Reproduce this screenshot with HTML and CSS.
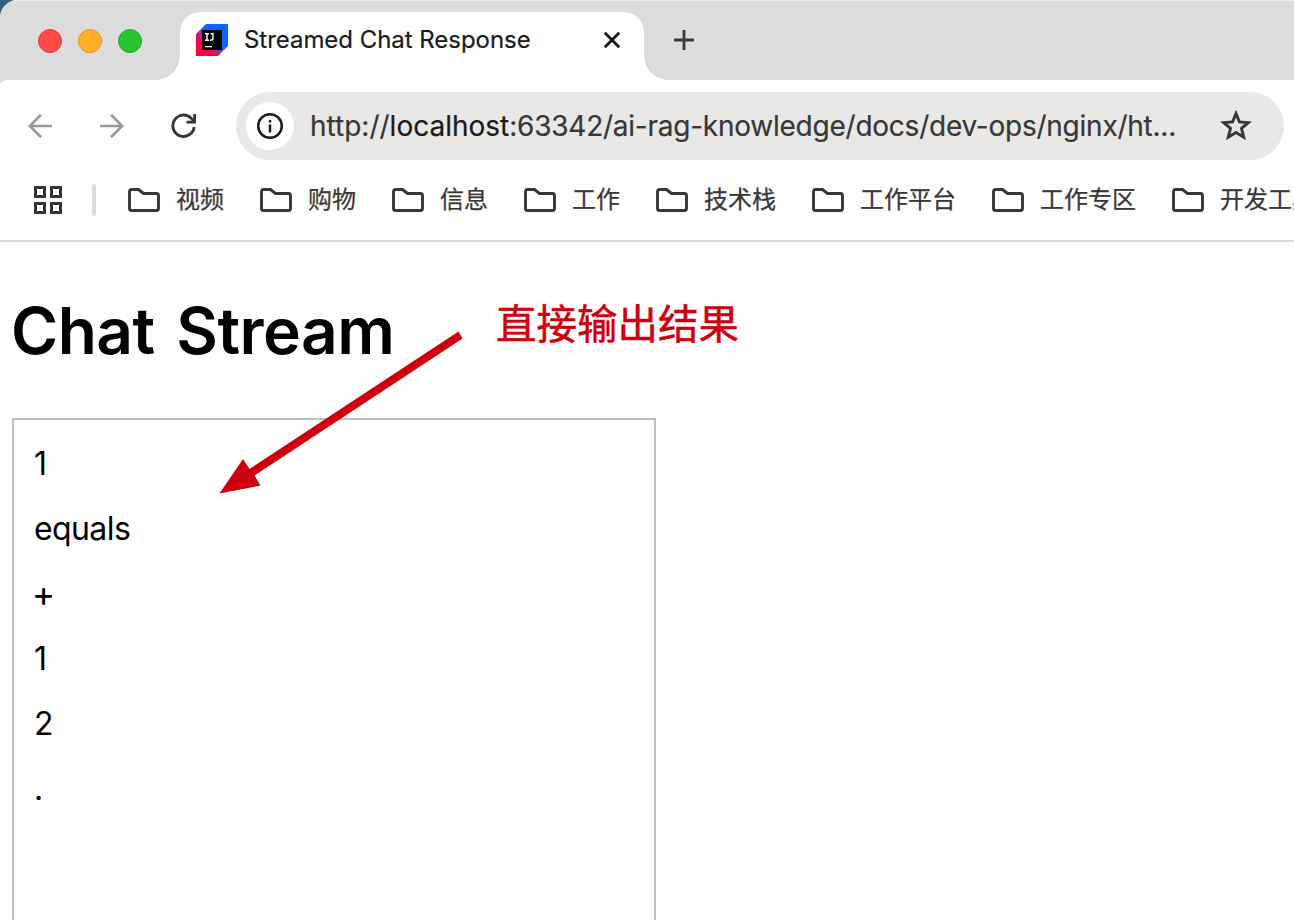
FILE: index.html
```html
<!DOCTYPE html>
<html lang="zh-CN">
<head>
<meta charset="utf-8">
<title>Streamed Chat Response</title>
<link rel="stylesheet" href="styles.css">
</head>
<body>
<svg class="defs" width="0" height="0" aria-hidden="true">
  <symbol id="folder" viewBox="0 0 32 24"><path d="M3.5 1.500H10.500L15.500 5.500H28.500a2 2 0 0 1 2 2V20.500a2 2 0 0 1-2 2H3.500a2 2 0 0 1-2-2V3.500a2 2 0 0 1 2-2Z" fill="none" stroke="#373737" stroke-width="2.900" stroke-linejoin="round"/></symbol>
</svg>
<div class="browser">
  <header class="tabstrip">
    <div class="lights"><i class="light red"></i><i class="light amber"></i><i class="light green"></i></div>
    <div class="tab">
      <svg class="favicon" width="32" height="32" viewBox="0 0 32 32">
        <defs><linearGradient id="ij" x1="0" y1="1" x2="1" y2="0"><stop offset=".28" stop-color="#ff0046"/><stop offset=".5" stop-color="#5a4fc8"/><stop offset=".6" stop-color="#0a66ff"/></linearGradient></defs>
        <path d="M10 0H32V22L22 32H0V10Z" fill="url(#ij)"/>
        <path d="M6 6H26V26H6Z"/>
        <path d="M9 9.700H13M11 9.700V16M9 16.300H13M14.500 9.700H17V14.500Q17 16.300 14 16.300" fill="none" stroke="#fff" stroke-width="1.400"/>
        <path d="M9 22H16V23.300H9Z" fill="#fff"/>
      </svg>
      <span class="tab-title">Streamed Chat Response</span>
      <svg class="close" width="18" height="18" viewBox="0 0 18 18"><path d="M1.800 1.800L16.200 16.200M16.200 1.800L1.800 16.200" stroke="#1b1b1b" stroke-width="2.900"/></svg>
    </div>
    <svg class="plus" width="20" height="20" viewBox="0 0 20 20"><path d="M10 0V20M0 10H20" stroke="#373737" stroke-width="2.800"/></svg>
  </header>
  <nav class="toolbar">
    <svg class="back" width="24" height="24" viewBox="0 0 24 24"><path d="M24 12H2M13 .8L1.800 12L13 23.200" fill="none" stroke="#999" stroke-width="2.700"/></svg>
    <svg class="forward" width="24" height="24" viewBox="0 0 24 24"><path d="M0 12H22M11 .8L22.200 12L11 23.200" fill="none" stroke="#999" stroke-width="2.700"/></svg>
    <svg class="reload" width="26" height="26" viewBox="0 0 26 26"><path d="M23.200 14A10.700 10.700 0 1 1 20.200 5.200L23.500 8.500" fill="none" stroke="#373737" stroke-width="2.900"/><path d="M22.200 1H25V10.500H15.500V7.800H22.200Z" fill="#373737"/></svg>
    <div class="address">
      <span class="info"><svg width="28" height="28" viewBox="0 0 28 28"><circle cx="14" cy="14" r="11.800" fill="none" stroke="#1b1b1b" stroke-width="2.500"/><path d="M14 12.500V20.500M14 8V10.500" stroke="#1b1b1b" stroke-width="2.500"/></svg></span>
      <span class="url">http://<b>localhost</b><span class="path">:63342/ai-rag-knowledge/docs/dev-ops/nginx/ht...</span></span>
      <svg class="star" width="32" height="32" viewBox="0 0 32 32"><path d="M16 3.500L19.400 11.900L28.400 12.600L21.500 18.400L23.700 27.200L16 22.500L8.300 27.200L10.500 18.400L3.600 12.600L12.600 11.900Z" fill="none" stroke="#373737" stroke-width="2.900"/></svg>
    </div>
  </nav>
  <nav class="bookmarks">
    <svg class="apps" width="28" height="28" viewBox="0 0 28 28"><path d="M1.500 1.500H10.500V10.500H1.500ZM17.500 1.500H26.500V10.500H17.500ZM1.500 17.500H10.500V26.500H1.500ZM17.500 17.500H26.500V26.500H17.500Z" fill="none" stroke="#373737" stroke-width="3"/></svg>
    <i class="divider"></i>
    <div class="folders">
      <a class="bookmark"><svg width="32" height="24"><use href="#folder"/></svg><span>视频</span></a>
      <a class="bookmark"><svg width="32" height="24"><use href="#folder"/></svg><span>购物</span></a>
      <a class="bookmark"><svg width="32" height="24"><use href="#folder"/></svg><span>信息</span></a>
      <a class="bookmark"><svg width="32" height="24"><use href="#folder"/></svg><span>工作</span></a>
      <a class="bookmark"><svg width="32" height="24"><use href="#folder"/></svg><span>技术栈</span></a>
      <a class="bookmark"><svg width="32" height="24"><use href="#folder"/></svg><span>工作平台</span></a>
      <a class="bookmark"><svg width="32" height="24"><use href="#folder"/></svg><span>工作专区</span></a>
      <a class="bookmark"><svg width="32" height="24"><use href="#folder"/></svg><span>开发工具</span></a>
    </div>
  </nav>
  <main class="page">
    <h1 class="heading">Chat Stream</h1>
    <div class="output">
      <p>1</p><p class="word">equals</p><p class="sign">+</p><p>1</p><p>2</p><p>.</p>
    </div>
    <svg class="arrow" width="250" height="170" viewBox="0 0 250 170"><path d="M243.500 1.500L247.500 8.500L39.500 145.500L45.500 155.500L4.500 163.500L28 129L34.500 139Z" fill="#cf000d"/></svg>
    <div class="note">直接输出结果</div>
  </main>
</div>
</body>
</html>
```
FILE: styles.css
```css
* { box-sizing: border-box; }
body { margin: 0; background: #356078; font-family: Inter, "Noto Sans CJK SC", sans-serif; }
.defs { position: absolute; }
svg { display: block; flex: none; }
.browser { width: 1294px; height: 920px; overflow: hidden; background: #fff; border-top-left-radius: 18px; }
.tabstrip { display: flex; height: 80px; padding-top: 11px; background: #dcdcdc; border-top: 1px solid #efefef; }
.lights { display: flex; gap: 16px; width: 180px; padding: 17px 0 0 38px; }
.light { width: 24px; height: 24px; border-radius: 50%; border: 1px solid; }
.red { background: #fe4948; border-color: #e0383a; }
.amber { background: #ffb028; border-color: #dc951d; }
.green { background: #29c331; border-color: #20aa27; }
.tab { position: relative; display: flex; width: 464px; height: 68px; padding: 12px 0 0 16px; background: #fff; border-radius: 20px 20px 0 0; }
.tab::before, .tab::after { content: ""; position: absolute; bottom: 0; width: 24px; height: 24px; }
.tab::before { left: -24px; background: radial-gradient(circle at 0 0, transparent 23.500px, #fff 24px); }
.tab::after { right: -24px; background: radial-gradient(circle at 100% 0, transparent 23.500px, #fff 24px); }
.tab-title { width: 359px; margin-left: 16px; line-height: 32px; font-size: 24px; letter-spacing: -.04px; color: #1b1b1b; white-space: nowrap; -webkit-text-stroke: .2px; }
.close { margin-top: 7px; }
.plus { margin: 18px 0 0 30px; }
.toolbar { display: flex; align-items: center; height: 92px; margin-left: -3px; padding-left: 31px; background: radial-gradient(circle at 12px 12px, #fff 12px, #dcdcdc 12.500px) 0 0 / 12px 12px no-repeat; }
.forward { margin-left: 48px; }
.reload { margin-left: 47px; }
.address { display: flex; align-items: center; width: 1048px; height: 68px; margin-left: 39px; padding-left: 10px; border-radius: 34px; background: #e9e8e7; }
.info { display: flex; align-items: center; justify-content: center; width: 48px; height: 48px; border-radius: 50%; background: #fff; }
.url { width: 894px; flex: none; margin-left: 16px; font-size: 28px; line-height: 36px; color: #373737; white-space: nowrap; -webkit-text-stroke: .2px; }
.url b { font-weight: 400; color: #1b1b1b; }
.path { letter-spacing: -.24px; }
.star { margin-left: 16px; }
.bookmarks { display: flex; height: 70px; padding: 14px 0 0 34px; border-bottom: 2px solid #d8dcdb; }
.divider { width: 4px; height: 32px; margin: -2px 0 0 30px; border-radius: 2px; background: #dcdcdc; flex: none; }
.folders { display: flex; gap: 36px; margin: -2px 0 0 32px; }
.bookmark { display: flex; gap: 16px; align-items: center; height: 32px; font: 24px/32px "Noto Sans CJK SC", sans-serif; color: #373737; white-space: nowrap; -webkit-text-stroke: .25px; }
.bookmark span { padding-bottom: 4px; }
.page { position: relative; height: 678px; padding: 48px 0 0 12px; }
.heading { margin: 0 0 0 -1px; height: 128px; font-size: 64px; line-height: 81px; font-weight: 600; letter-spacing: -.5px; word-spacing: 6px; color: #000; white-space: nowrap; }
.output { width: 644px; height: 600px; padding: 11px 20px; border: 2px solid #bfbfbf; }
.output p { margin: 0; height: 65px; line-height: 65px; font-size: 32px; color: #000; }
.output .word { letter-spacing: -.6px; }
.output .sign { margin-left: -2px; font-size: 35px; }
.arrow { position: absolute; left: 215px; top: 88px; }
.note { position: absolute; left: 496px; top: 50px; font: 400 40.500px/60px "Noto Sans CJK SC", sans-serif; color: #cf000d; white-space: nowrap; -webkit-text-stroke: .5px; }
```
